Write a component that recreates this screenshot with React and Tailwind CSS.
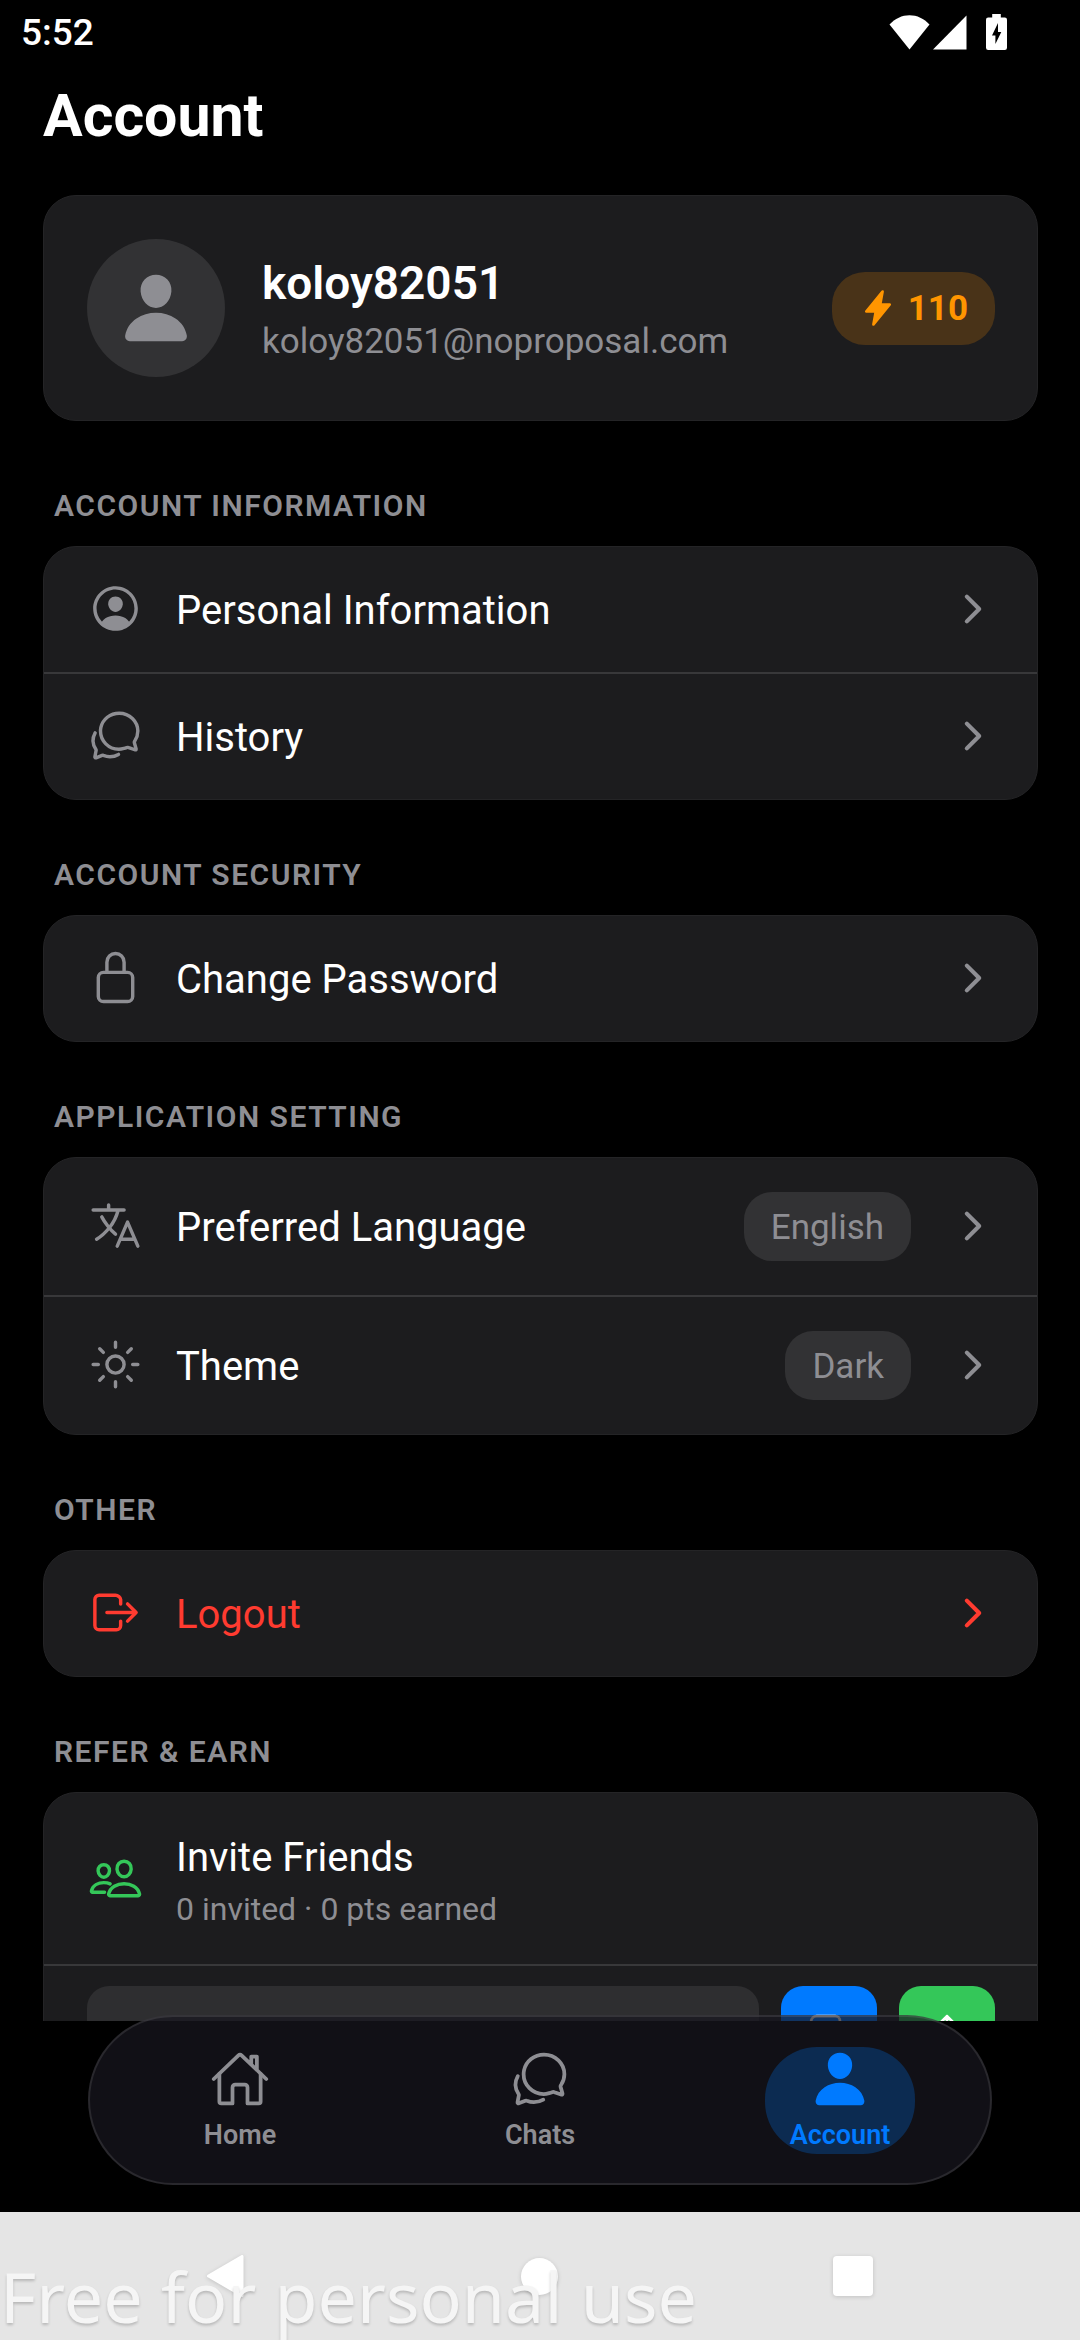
import {
  IoChatbubblesOutline,
  IoChevronForward,
  IoCopyOutline,
  IoFlash,
  IoHomeOutline,
  IoLanguageOutline,
  IoLockClosedOutline,
  IoLogOutOutline,
  IoPeopleOutline,
  IoPerson,
  IoPersonCircleOutline,
  IoShareOutline,
  IoSunnyOutline,
} from 'react-icons/io5'

const SECTIONS = [
  {
    title: 'ACCOUNT INFORMATION',
    rows: [
      { label: 'Personal Information', icon: IoPersonCircleOutline },
      { label: 'History', icon: IoChatbubblesOutline },
    ],
  },
  {
    title: 'ACCOUNT SECURITY',
    rows: [{ label: 'Change Password', icon: IoLockClosedOutline }],
  },
  {
    title: 'APPLICATION SETTING',
    rows: [
      { label: 'Preferred Language', icon: IoLanguageOutline, value: 'English' },
      { label: 'Theme', icon: IoSunnyOutline, value: 'Dark' },
    ],
  },
  {
    title: 'OTHER',
    rows: [{ label: 'Logout', icon: IoLogOutOutline, danger: true }],
  },
]

const TABS = [
  { label: 'Home', icon: IoHomeOutline },
  { label: 'Chats', icon: IoChatbubblesOutline },
  { label: 'Account', icon: IoPerson, active: true },
]

export default function App() {
  return (
    <div className="flex h-screen flex-col overflow-hidden bg-black font-['Roboto',sans-serif] text-white">
      <StatusBar />

      <main className="min-h-0 flex-1 overflow-y-auto pr-[42px] pl-[43px] [scrollbar-width:none]">
        <h1 className="mb-[43px] text-[59px] leading-[72px] font-bold">Account</h1>
        <ProfileCard />
        <div className="pt-[10px]">
          {SECTIONS.map((section) => (
            <Section key={section.title} title={section.title}>
              {section.rows.map((row) => (
                <Row key={row.label} {...row} />
              ))}
            </Section>
          ))}
          <Section title="REFER &amp; EARN">
            <InviteFriends />
          </Section>
        </div>
      </main>

      <TabBar />
      <SystemBar />
    </div>
  )
}

function StatusBar() {
  return (
    <header className="flex h-20 shrink-0 items-start justify-between pt-[11px] pr-[73px] pl-[21px]">
      <span className="text-[37px] leading-[44px] font-medium">5:52</span>
      <div className="flex items-end pt-[3px] text-white">
        <svg className="h-[36px] w-[41px]" viewBox="0 0 41 36" fill="currentColor" aria-hidden="true">
          <path d="M20.5 35.5 L0.5 10.5 C6 4.5 13 1.2 20.5 1.2 S35 4.5 40.5 10.5 Z" />
        </svg>
        <svg className="ml-[3px] h-[36px] w-[34px]" viewBox="0 0 34 36" fill="currentColor" aria-hidden="true">
          <path d="M33.5 1.5 V35.5 H0 Z" />
        </svg>
        <svg className="ml-[19px] h-[36px] w-[21px]" viewBox="0 0 21 36" fill="currentColor" aria-hidden="true">
          <path
            fillRule="evenodd"
            d="M6.2 0 H14.8 V3.5 H18.8 Q21 3.5 21 5.7 V33.8 Q21 36 18.8 36 H2.2 Q0 36 0 33.8 V5.7 Q0 3.5 2.2 3.5 H6.2 Z M12 9 L6 21.5 H9.4 V30 L15.3 18 H12 Z"
          />
        </svg>
      </div>
    </header>
  )
}

function ProfileCard() {
  return (
    <section className="flex items-center rounded-[33px] border border-[#242426] bg-[#1c1c1e] py-[43px] pr-[42px] pl-[43px]">
      <div className="flex h-[138px] w-[138px] shrink-0 items-center justify-center rounded-full bg-[#323234] text-[#8e8e93]">
        <IoPerson className="h-[76px] w-[76px]" />
      </div>
      <div className="ml-[37px] min-w-0 flex-1 pt-1">
        <h2 className="text-[46px] leading-[56px] font-semibold">koloy82051</h2>
        <p className="mt-2 text-[35px] leading-[46px] text-[#8e8e93]">koloy82051@noproposal.com</p>
      </div>
      <div className="flex h-[73px] items-center gap-[11px] rounded-[33px] bg-[#493318] px-[27px] text-[#ff9500]">
        <IoFlash className="h-[38px] w-[38px]" />
        <span className="pt-0.5 text-[35px] leading-[42px] font-bold">110</span>
      </div>
    </section>
  )
}

function Section({ title, children }) {
  return (
    <section>
      <h2 className="mt-[57px] mb-[22px] px-[11px] text-[30px] leading-[36px] font-semibold tracking-wider text-[#8e8e93]">
        {title}
      </h2>
      <div className="divide-y-2 divide-[#38383a] overflow-hidden rounded-[33px] border border-[#242426] bg-[#1c1c1e]">
        {children}
      </div>
    </section>
  )
}

function Row({ label, icon: Icon, value, danger }) {
  const muted = danger ? 'text-[#ff3b30]' : 'text-[#8e8e93]'
  return (
    <button type="button" className="flex w-full items-center py-[34px] pr-[42px] pl-[44px] text-left">
      <Icon className={`mb-0.5 h-[55px] w-[55px] shrink-0 ${muted}`} />
      <span className={`ml-[33px] flex-1 pt-0.5 text-[40px] leading-[48px] ${danger ? 'text-[#ff3b30]' : 'text-white'}`}>{label}</span>
      {value && (
        <span className="mr-[40px] rounded-[28px] bg-[#323234] px-[27px] pt-[14px] pb-[12px] text-[35px] leading-[43px] text-[#8e8e93]">
          {value}
        </span>
      )}
      <IoChevronForward className={`mb-0.5 h-[44px] w-[44px] shrink-0 ${muted}`} />
    </button>
  )
}

function InviteFriends() {
  return (
    <>
      <div className="flex items-center px-[44px] py-[35px]">
        <IoPeopleOutline className="h-[55px] w-[55px] shrink-0 text-[#34c759]" />
        <div className="ml-[33px] pt-0.5">
          <h3 className="text-[40px] leading-[56px]">Invite Friends</h3>
          <p className="mt-[3px] text-[32px] leading-[40px] text-[#8e8e93]">0 invited · 0 pts earned</p>
        </div>
      </div>
      <div className="flex gap-[22px] pt-5 pr-[42px] pb-[43px] pl-[43px]">
        <input readOnly aria-label="Invite link" className="h-24 min-w-0 flex-1 rounded-[22px] bg-[#2e2e30] px-8 text-[32px]" />
        <button type="button" aria-label="Copy link" className="flex h-24 w-24 items-center justify-center rounded-[22px] bg-[#007aff]">
          <IoCopyOutline className="h-[44px] w-[44px]" />
        </button>
        <button type="button" aria-label="Share link" className="flex h-24 w-24 items-center justify-center rounded-[22px] bg-[#34c759]">
          <IoShareOutline className="h-[44px] w-[44px]" />
        </button>
      </div>
    </>
  )
}

function TabBar() {
  return (
    <div className="relative z-10 -mt-[6px] shrink-0 px-[88px] pb-[27px]">
      <nav className="grid h-[170px] grid-cols-3 items-center rounded-full border-2 border-white/10 bg-[#18171f]/70">
        {TABS.map(({ label, icon: Icon, active }) => (
          <button key={label} type="button" className={`flex justify-center ${active ? 'text-[#007aff]' : 'text-[#8e8e93]'}`}>
            <span className={`flex h-[107px] w-[150px] flex-col items-center pt-[2px] ${active ? 'rounded-[52px] bg-[#0c2b51]' : ''}`}>
              <Icon className="h-[60px] w-[60px]" />
              <span className="mt-[10px] text-[27px] leading-[32px] font-semibold">{label}</span>
            </span>
          </button>
        ))}
      </nav>
    </div>
  )
}

function SystemBar() {
  return (
    <footer className="relative grid h-32 shrink-0 grid-cols-3 items-center bg-[#e5e5e5] px-[71px]">
      <button type="button" aria-label="Back" className="flex justify-center">
        <svg className="h-[46px] w-[40px] drop-shadow-sm" viewBox="0 0 40 46" fill="#fff" aria-hidden="true">
          <path d="M35 3.5 V42.5 L1.5 23 Z" stroke="#fff" strokeWidth="3" strokeLinejoin="round" />
        </svg>
      </button>
      <button type="button" aria-label="Home" className="flex justify-center">
        <span className="h-[37px] w-[37px] rounded-full bg-white drop-shadow-sm" />
      </button>
      <button type="button" aria-label="Recents" className="flex justify-center">
        <span className="h-[40px] w-[40px] rounded-[4px] bg-white drop-shadow-sm" />
      </button>
      <span className="pointer-events-none absolute bottom-1 left-0 font-['Noto_Sans',sans-serif] text-[70px] leading-[80px] whitespace-nowrap text-[#f5f5f5] [text-shadow:0_2px_3px_rgb(0_0_0/0.2)]">
        Free for personal use
      </span>
    </footer>
  )
}
